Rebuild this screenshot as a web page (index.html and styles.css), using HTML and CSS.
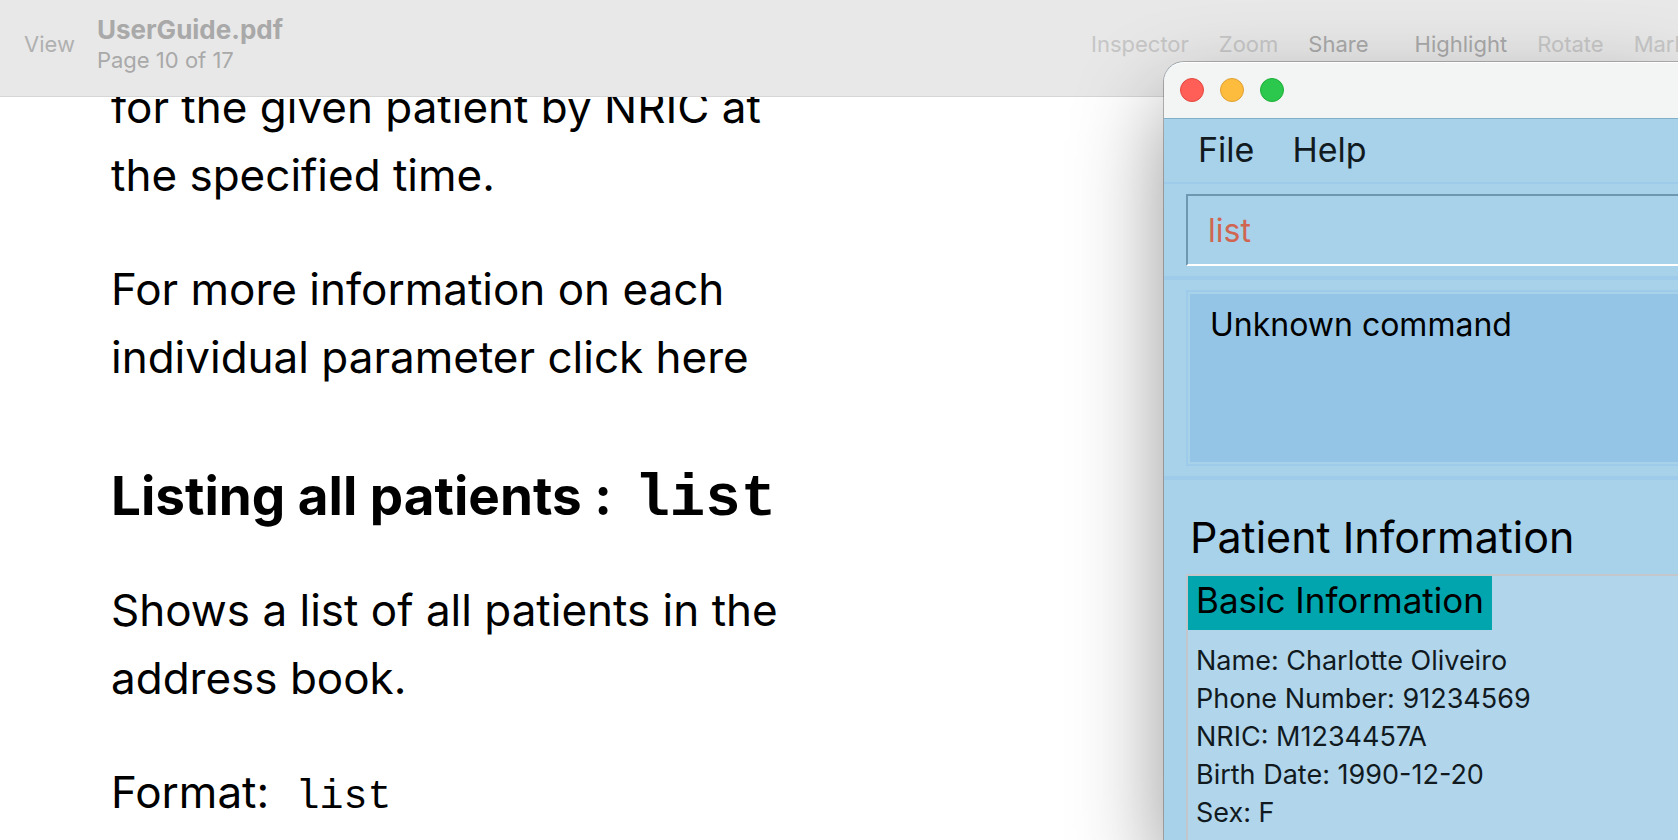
FILE: index.html
```html
<!DOCTYPE html>
<html lang="en">
<head>
<meta charset="utf-8">
<title>UserGuide.pdf</title>
<link rel="stylesheet" href="styles.css">
</head>
<body>
<div class="desktop">
  <header class="toolbar">
    <button class="tool tool-view" type="button">View</button>
    <div class="document-info">
      <div class="document-title">UserGuide.pdf</div>
      <div class="document-page">Page 10 of 17</div>
    </div>
    <div class="tools">
      <button class="tool tool-dim" type="button">Inspector</button>
      <button class="tool tool-dim" type="button">Zoom</button>
      <button class="tool" type="button">Share</button>
      <button class="tool tool-group" type="button">Highlight</button>
      <button class="tool tool-dim" type="button">Rotate</button>
      <button class="tool tool-dim" type="button">Markup</button>
    </div>
  </header>
  <main class="viewer">
    <article class="page">
      <p>for the given patient by NRIC at<br>the specified time.</p>
      <p>For more information on each<br>individual parameter click here</p>
      <h2>Listing all patients : <code>list</code></h2>
      <p>Shows a list of all patients in the<br>address book.</p>
      <p>Format: <code>list</code></p>
    </article>
  </main>

  <section class="window" aria-label="Patient records">
    <div class="titlebar">
      <button class="light light-close" type="button" aria-label="Close"></button>
      <button class="light light-minimize" type="button" aria-label="Minimize"></button>
      <button class="light light-zoom" type="button" aria-label="Zoom window"></button>
    </div>
    <nav class="menubar">
      <button class="menu" type="button">File</button>
      <button class="menu" type="button">Help</button>
    </nav>
    <div class="pane">
      <input class="command" type="text" value="list" aria-label="Command">
    </div>
    <div class="pane">
      <div class="result"><output class="result-text">Unknown command</output></div>
    </div>
    <div class="pane pane-patient">
      <h1 class="patient-heading">Patient Information</h1>
      <div class="patient-card">
        <h2 class="badge">Basic Information</h2>
        <ul class="details">
          <li>Name: Charlotte Oliveiro</li>
          <li>Phone Number: 91234569</li>
          <li>NRIC: M1234457A</li>
          <li>Birth Date: 1990-12-20</li>
          <li>Sex: F</li>
        </ul>
      </div>
    </div>
  </section>
</div>
</body>
</html>
```
FILE: styles.css
```css
* {
  box-sizing: border-box;
}

body {
  margin: 0;
  font-family: Inter, "Liberation Sans", sans-serif;
  color: #000;
  background: #fff;
}

button {
  padding: 0;
  border: 0;
  background: none;
  font: inherit;
  color: inherit;
}

.desktop {
  position: relative;
  display: flex;
  flex-direction: column;
  height: 100vh;
  overflow: hidden;
}

/* PDF viewer */
.toolbar {
  display: flex;
  flex: none;
  align-items: center;
  height: 97px;
  padding: 0 0 8px 24px;
  border-bottom: 1px solid #d6d6d6;
  background: #e8e8e8;
  color: #a9a9a9;
  white-space: nowrap;
}

.tool {
  font-size: 22px;
  line-height: 28px;
}

.tool-view {
  color: #b0b0b0;
}

.tool-dim {
  color: #c6c6c6;
}

.document-info {
  margin-left: 22px;
}

.document-title {
  font-size: 26px;
  font-weight: 700;
  line-height: 32px;
}

.document-page {
  font-size: 22px;
  line-height: 28px;
}

.tools {
  display: flex;
  gap: 30px;
  width: 587px;
  margin-left: auto;
  overflow: hidden;
}

.tool-group {
  margin-left: 16px;
}

.viewer {
  flex: 1;
  min-height: 0;
  overflow: hidden;
}

.page {
  margin-top: -24px;
  padding-left: 111px;
  font-size: 44px;
  line-height: 68px;
}

.page p {
  margin: 0 0 46px;
}

.page code {
  margin-left: 14px;
  font-family: "Liberation Mono", monospace;
  font-size: 40px;
}

.page h2 {
  margin: 71px 0 42px;
  font-size: 53px;
  font-weight: 700;
  line-height: 68px;
}

.page h2 code {
  margin-left: 10px;
  font-size: 59px;
}

/* Application window */
.window {
  position: absolute;
  top: 62px;
  right: 0;
  bottom: 0;
  left: 1164px;
  display: flex;
  flex-direction: column;
  border-top-left-radius: 20px;
  background: #a8d1ea;
  box-shadow: 0 0 0 1px rgba(0, 0, 0, 0.25), 0 40px 90px rgba(0, 0, 0, 0.42);
}

.titlebar {
  display: flex;
  flex: none;
  gap: 16px;
  align-items: center;
  height: 57px;
  padding: 0 0 2px 16px;
  border-top: 1px solid #fff;
  border-bottom: 1px solid #7fafc9;
  border-top-left-radius: 20px;
  background: #f3f5f4;
}

.light {
  width: 24px;
  height: 24px;
  border: 1px solid;
  border-radius: 50%;
}

.light-close {
  border-color: #e2483f;
  background: #ff5f57;
}

.light-minimize {
  border-color: #dfa033;
  background: #febc3f;
}

.light-zoom {
  border-color: #1faf38;
  background: #2bc84d;
}

.menubar {
  display: flex;
  flex: none;
  gap: 38px;
  height: 65px;
  padding: 0 34px 2px;
  border-bottom: 2px solid #9dcbe9;
}

.menu {
  font-size: 34px;
  color: #111a1f;
}

.pane {
  flex: none;
  padding: 10px 0 10px 22px;
  border-bottom: 4px solid #9dcbe9;
}

.command {
  display: block;
  width: 100%;
  height: 72px;
  padding: 0 20px;
  border: 2px solid #7097b2;
  border-right: 0;
  border-bottom-color: #fff;
  border-radius: 0;
  outline: 0;
  background: transparent;
  font: inherit;
  font-size: 32px;
  color: #d06651;
}

.result {
  height: 176px;
  padding: 2px 0 2px 2px;
  border: 2px solid #9dcbe9;
  border-right: 0;
}

.result-text {
  display: block;
  height: 100%;
  padding: 10px 20px;
  background: #94c5e6;
  font-size: 32px;
  line-height: 42px;
}

.pane-patient {
  display: flex;
  flex: 1;
  flex-direction: column;
  padding: 28px 0 0 22px;
  border: 0;
}

.patient-heading {
  margin: 0 0 8px 4px;
  font-size: 43px;
  font-weight: 400;
  line-height: 58px;
}

.patient-card {
  flex: 1;
  border: 2px solid #c3c6ca;
  border-width: 2px 0 0 2px;
  background: #b1d6ec;
}

.badge {
  width: fit-content;
  margin: 0;
  padding: 0 8px 6px;
  background: #00a5ad;
  font-size: 35px;
  font-weight: 400;
  line-height: 48px;
}

.details {
  margin: 12px 0 0;
  padding: 0 8px;
  font-size: 27px;
  line-height: 38px;
  color: #111a1f;
  list-style: none;
}
```
